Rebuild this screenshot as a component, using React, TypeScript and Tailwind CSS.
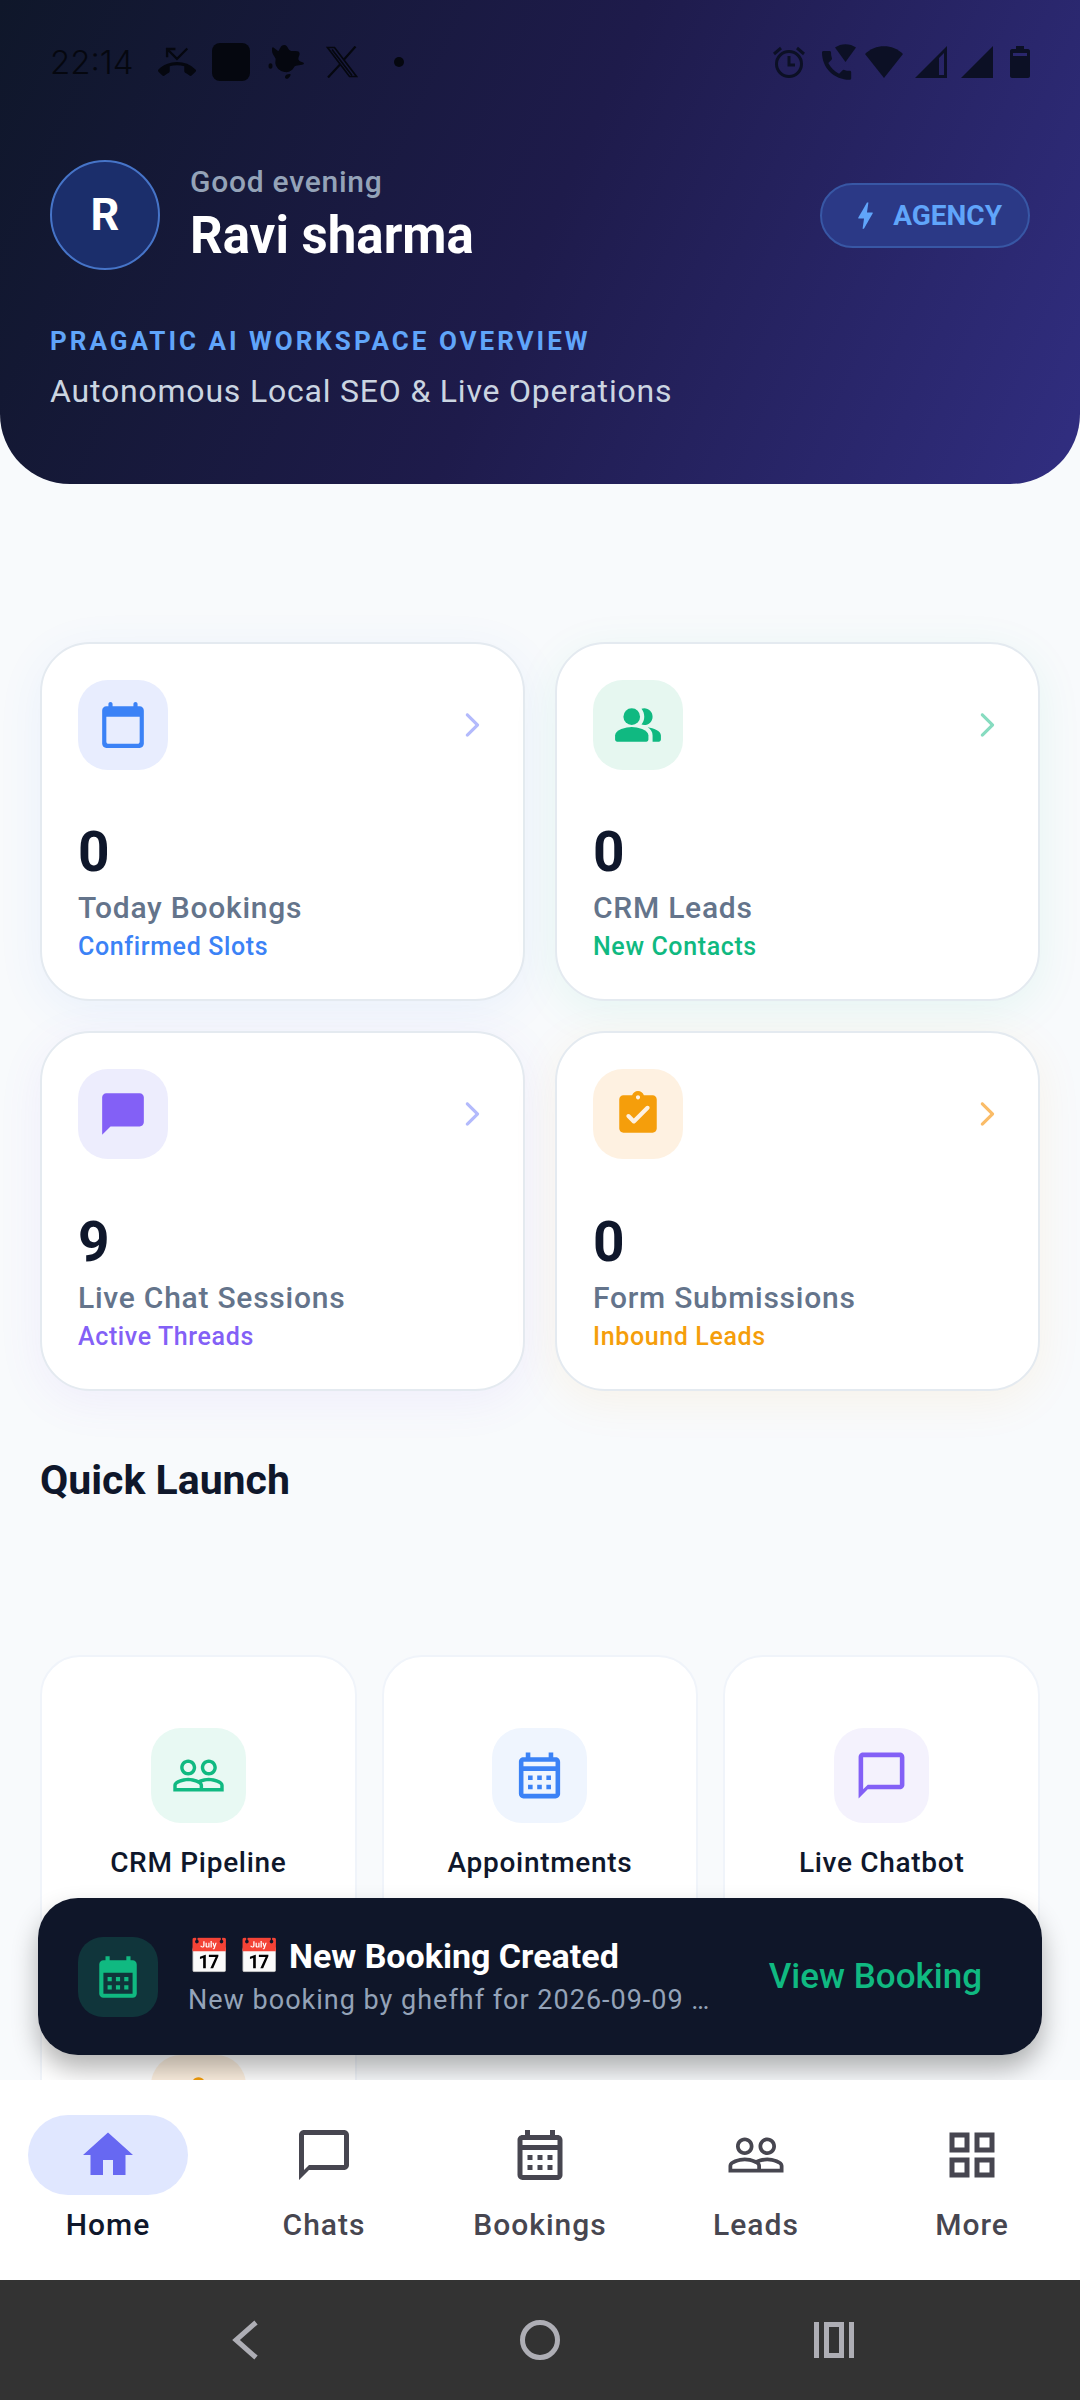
import type { ReactNode } from 'react';
import {
  MdBolt,
  MdCalendarMonth,
  MdChatBubble,
  MdChatBubbleOutline,
  MdHome,
  MdOutlineAssignment,
  MdOutlineCalendarMonth,
  MdOutlineGridView,
  MdPeopleOutline,
  MdPhoneMissed,
} from 'react-icons/md';

function CalendarTodayIcon() {
  return (
    <svg viewBox="0 0 24 24" className="size-[50px] fill-current">
      <path d="M20 3h-1V2c0-.55-.45-1-1-1s-1 .45-1 1v1H7V2c0-.55-.45-1-1-1s-1 .45-1 1v1H4c-1.1 0-2 .9-2 2v16c0 1.1.9 2 2 2h16c1.1 0 2-.9 2-2V5c0-1.1-.9-2-2-2zm-1 18H5c-.55 0-1-.45-1-1V8h16v12c0 .55-.45 1-1 1z" />
    </svg>
  );
}

function PeopleIcon() {
  return (
    <svg viewBox="0 0 24 24" className="size-[50px] fill-current">
      <circle cx="9" cy="8" r="4" />
      <path d="M15 12c2.21 0 4-1.79 4-4s-1.79-4-4-4c-.47 0-.91.1-1.33.24C14.5 5.27 15 6.58 15 8s-.5 2.73-1.33 3.76c.42.14.86.24 1.33.24z" />
      <path d="M16.67 13.13C18.04 14.06 19 15.32 19 17v3h3c.55 0 1-.45 1-1v-2c0-2.18-3.57-3.47-6.33-3.87z" />
      <path d="M9 13c-2.67 0-8 1.34-8 4v2c0 .55.45 1 1 1h14c.55 0 1-.45 1-1v-2c0-2.66-5.33-4-8-4z" />
    </svg>
  );
}

function TaskIcon() {
  return (
    <svg viewBox="0 0 24 24" className="size-[50px] fill-current">
      <path
        fillRule="evenodd"
        d="M19 3h-4.18C14.4 1.84 13.3 1 12 1s-2.4.84-2.82 2H5c-1.1 0-2 .9-2 2v14c0 1.1.9 2 2 2h14c1.1 0 2-.9 2-2V5c0-1.1-.9-2-2-2zm-7 0c.55 0 1 .45 1 1s-.45 1-1 1-1-.45-1-1 .45-1 1-1zM10.71 16.29c-.39.39-1.02.39-1.41 0L6.71 13.7c-.39-.39-.39-1.02 0-1.41.39-.39 1.02-.39 1.41 0L10 14.17l5.88-5.88c.39-.39 1.02-.39 1.41 0 .39.39.39 1.02 0 1.41l-6.58 6.59z"
      />
    </svg>
  );
}

function ArrowIcon({ className }: { className: string }) {
  return (
    <svg viewBox="0 0 24 24" className={`size-[30px] fill-current ${className}`}>
      <path d="M7.38 21.01c.49.49 1.28.49 1.77 0l8.31-8.31c.39-.39.39-1.02 0-1.41L9.15 2.98c-.49-.49-1.28-.49-1.77 0s-.49 1.28 0 1.77L14.62 12l-7.25 7.25c-.48.48-.48 1.28.01 1.76z" />
    </svg>
  );
}

function StatusBar() {
  return (
    <div className="flex h-[124px] items-center justify-between">
      <div className="flex items-center text-[#05070f]">
        <span className="font-[Inter] text-[33px] leading-10 font-light">22:14</span>
        <MdPhoneMissed className="ml-6 size-[38px]" />
        <span className="ml-4 size-[38px] rounded-lg bg-current" />
        {/* paint splash */}
        <svg viewBox="0 0 36 34" className="ml-[18px] h-[34px] w-9 fill-current">
          <path d="M4 3c1-2 2 0 4 1.500 1.500 1 2 2 3 1C12 3 13.500 0 16 0c2.500 0 3.500 2 4.500 4 1 1.500 2 2 4 2h3c3 0 4.500 1 4 3.500-.4 2-1.500 3.500-1 5s2 2 4 2.800c2 .8 2 2-.5 2.500l-6 1c-2 .5-2 2-3.500 3.700-2 2-5 3-8 2.500-5-1-8-4-9-8-.6-2.500.500-3.500 0-5.500C6.500 11 4 9 4 6z" />
          <ellipse cx="2.500" cy="21" rx="2" ry="2.800" />
          <path d="M17 32c0-2 2-3 5-3 1.500.5 0 3-2 4.500-1.500.8-3 0-3-1.500z" />
        </svg>
        <svg
          viewBox="0 0 32 32"
          className="ml-[22px] size-8"
          fill="none"
          stroke="currentColor"
          strokeWidth="1.700"
        >
          <path d="M1.500 1.500h7l22 29h-7zM6 3.500l20 26" />
          <path d="M29.500.500L18 13.500M14 18.500L2 31.500" strokeWidth="2.200" />
        </svg>
        <span className="ml-9 size-[10px] rounded-full bg-current" />
      </div>
      <div className="flex items-center text-[#0c1025]">
        {/* alarm */}
        <svg viewBox="0 0 32 32" className="size-8" fill="none" stroke="currentColor" strokeWidth="3">
          <circle cx="16" cy="18" r="12.500" />
          <path d="M1 8l7-6M31 8l-7-6M16 10v9h6" />
        </svg>
        {/* wifi calling */}
        <svg viewBox="0 0 34 36" className="ml-[17px] h-9 w-[34px] fill-current">
          <path d="M13 3.500C19-1 28-1 34 3.500L23.500 18z" />
          <path d="M0 8.500C0 7.500.7 7 1.500 7h6C8.500 7 9 7.600 9 8.500c0 2 .3 4 .9 5.600.2.600.1 1.200-.4 1.700L6.300 19c2.400 4.600 6.200 8.400 10.800 10.800l3.500-3.500c.4-.4 1-.6 1.600-.4 1.700.6 3.600.9 5.500.9.900 0 1.500.600 1.500 1.500v6c0 .9-.6 1.500-1.500 1.500C12 35.800 0 24 0 8.500z" />
        </svg>
        <svg viewBox="0 0 38 32" className="ml-[9px] h-8 w-[38px] fill-current">
          <path d="M0 8C10-2.500 28-2.500 38 8L19 32z" />
        </svg>
        <svg viewBox="0 0 32 32" className="ml-3 size-8 fill-current">
          <path fillRule="evenodd" d="M32 0v32H0zM24 12v17h5V7z" />
        </svg>
        <svg viewBox="0 0 32 32" className="ml-[14px] size-8 fill-current">
          <path d="M32 0v32H0z" />
        </svg>
        <svg viewBox="0 0 20 32" className="ml-[17px] h-8 w-5 fill-current">
          <path
            fillRule="evenodd"
            d="M6 0h8v3h4c1 0 2 1 2 2v25c0 1-1 2-2 2H2c-1 0-2-1-2-2V5c0-1 1-2 2-2h4zM3 7v3h14V7z"
          />
        </svg>
      </div>
    </div>
  );
}

function Header() {
  return (
    <header className="rounded-b-[70px] bg-[linear-gradient(114deg,#0f172a,#1e1b4b_50%,#312e81)] px-[50px] pb-[69px]">
      <StatusBar />
      <div className="mt-9 flex items-center">
        <div className="flex size-[110px] items-center justify-center rounded-full border-2 border-[#4674c8] bg-[#1b2e6b] text-[45px] font-bold text-white">
          R
        </div>
        <div className="ml-[30px] flex-1">
          <p className="text-[30px] leading-[42px] font-medium tracking-wide text-[#94a3b8]">Good evening</p>
          <h1 className="text-[51px] leading-[66px] font-bold text-white">Ravi sharma</h1>
        </div>
        <div className="flex items-center gap-[10px] rounded-full border-2 border-[#3857a5] bg-[#2b3986] px-[26px] py-[11px] text-[#60a5fa]">
          <MdBolt className="size-[35px]" />
          <span className="text-[28px] leading-[39px] font-bold">AGENCY</span>
        </div>
      </div>
      <h2 className="mt-[52px] text-[26px] leading-[38px] font-bold tracking-[3px] text-[#60a5fa]">
        PRAGATIC AI WORKSPACE OVERVIEW
      </h2>
      <p className="mt-[7px] text-[32px] leading-[48px] tracking-wide text-[#cbd5e1]">
        Autonomous Local SEO &amp; Live Operations
      </p>
    </header>
  );
}

type Stat = {
  value: number;
  title: string;
  note: string;
  icon: ReactNode;
  card: string;
  tile: string;
  text: string;
  arrow: string;
};

const stats: Stat[] = [
  {
    value: 0,
    title: 'Today Bookings',
    note: 'Confirmed Slots',
    icon: <CalendarTodayIcon />,
    card: 'shadow-[0_10px_46px_rgba(59,130,246,0.08)]',
    tile: 'bg-[#e8edfe]',
    text: 'text-[#3b82f6]',
    arrow: 'text-[#b3bafc]',
  },
  {
    value: 0,
    title: 'CRM Leads',
    note: 'New Contacts',
    icon: <PeopleIcon />,
    card: 'shadow-[0_10px_46px_rgba(16,185,129,0.08)]',
    tile: 'bg-[#e6f7f0]',
    text: 'text-[#10b981]',
    arrow: 'text-[#87dcc0]',
  },
  {
    value: 9,
    title: 'Live Chat Sessions',
    note: 'Active Threads',
    icon: <MdChatBubble className="size-[50px]" />,
    card: 'shadow-[0_10px_46px_rgba(139,92,246,0.08)]',
    tile: 'bg-[#ededfd]',
    text: 'text-[#8360f6]',
    arrow: 'text-[#b3bafc]',
  },
  {
    value: 0,
    title: 'Form Submissions',
    note: 'Inbound Leads',
    icon: <TaskIcon />,
    card: 'shadow-[0_10px_46px_rgba(245,158,11,0.08)]',
    tile: 'bg-[#fef1e1]',
    text: 'text-[#f59e0b]',
    arrow: 'text-[#fabc68]',
  },
];

function StatCard({ stat }: { stat: Stat }) {
  return (
    <a
      href="#"
      className={`flex aspect-[27/20] flex-col justify-between rounded-[50px] border-2 border-[#e4eaf0] bg-white px-9 pt-9 pb-[34px] ${stat.card}`}
    >
      <div className="flex items-center justify-between">
        <span className={`flex size-[90px] items-center justify-center rounded-[30px] ${stat.tile} ${stat.text}`}>
          {stat.icon}
        </span>
        <ArrowIcon className={stat.arrow} />
      </div>
      <div>
        <p className="mb-1 text-[55px] leading-[60px] font-bold text-slate-900">{stat.value}</p>
        <p className="text-[30px] leading-[43px] font-medium tracking-wide text-[#64748b]">{stat.title}</p>
        <p className={`text-[25px] leading-[36px] font-medium tracking-wide ${stat.text}`}>{stat.note}</p>
      </div>
    </a>
  );
}

const shortcuts = [
  { label: 'CRM Pipeline', icon: <MdPeopleOutline className="size-[55px]" />, tile: 'bg-[#e8f9f3] text-[#10b981]' },
  {
    label: 'Appointments',
    icon: <MdOutlineCalendarMonth className="size-[55px]" />,
    tile: 'bg-[#eff5fe] text-[#3b82f6]',
  },
  {
    label: 'Live Chatbot',
    icon: <MdChatBubbleOutline className="size-[55px]" />,
    tile: 'bg-[#f4f2fd] text-[#8360f6]',
  },
  { label: '', icon: <MdOutlineAssignment className="size-[55px]" />, tile: 'bg-[#fef1e1] text-[#f59e0b]' },
];

function Snackbar() {
  return (
    <div
      role="status"
      className="absolute inset-x-[38px] bottom-[25px] flex items-center rounded-[40px] bg-[#0f1629] px-10 py-[35px] shadow-[0_14px_26px_rgba(0,0,0,0.3)]"
    >
      <span className="flex size-20 items-center justify-center rounded-[25px] bg-[#10353b] text-[#10b981]">
        <MdCalendarMonth className="size-[50px]" />
      </span>
      <div className="ml-[30px] min-w-0 flex-1">
        <p className="truncate text-[34px] leading-[47px] font-bold text-white">📅 📅 New Booking Created</p>
        <p className="truncate text-[27px] leading-[40px] tracking-[1px] text-[#94a3b8]">
          New booking by ghefhf for 2026-09-09 …
        </p>
      </div>
      <button className="px-5 text-[35px] leading-[50px] font-medium text-[#10b981]">View Booking</button>
    </div>
  );
}

const tabs = [
  { label: 'Home', icon: <MdHome className="size-[60px]" />, active: true },
  { label: 'Chats', icon: <MdChatBubbleOutline className="size-[60px]" /> },
  { label: 'Bookings', icon: <MdOutlineCalendarMonth className="size-[60px]" /> },
  { label: 'Leads', icon: <MdPeopleOutline className="size-[60px]" /> },
  { label: 'More', icon: <MdOutlineGridView className="size-[60px]" /> },
];

function TabBar() {
  return (
    <nav className="grid h-[200px] shrink-0 grid-cols-5 bg-white pt-[35px]">
      {tabs.map((tab) => (
        <a
          key={tab.label}
          href="#"
          className={`flex flex-col items-center gap-[10px] ${tab.active ? 'text-slate-900' : 'text-[#474650]'}`}
        >
          <span
            className={`flex h-20 w-40 items-center justify-center rounded-full ${
              tab.active ? 'bg-indigo-100 text-[#6768f2]' : ''
            }`}
          >
            {tab.icon}
          </span>
          <span className="text-[30px] leading-10 font-medium tracking-[1px]">{tab.label}</span>
        </a>
      ))}
    </nav>
  );
}

function SystemBar() {
  return (
    <div className="flex h-[120px] shrink-0 items-center justify-center gap-[234px] bg-[#333333] text-[#aeaeb5]">
      <button aria-label="Back">
        <svg viewBox="0 0 60 60" className="size-[60px]" fill="none" stroke="currentColor" strokeWidth="5">
          <path d="M40 12.500L20 30 40 47.500" />
        </svg>
      </button>
      <button aria-label="Home">
        <svg viewBox="0 0 60 60" className="size-[60px]" fill="none" stroke="currentColor" strokeWidth="5">
          <circle cx="30" cy="30" r="17.500" />
        </svg>
      </button>
      <button aria-label="Recents">
        <svg viewBox="0 0 60 60" className="size-[60px]" fill="none" stroke="currentColor" strokeWidth="5">
          <path d="M12.500 12v36M47.500 12v36M22.500 14.500h15v31h-15z" />
        </svg>
      </button>
    </div>
  );
}

export default function App() {
  return (
    <div className="flex h-screen flex-col bg-[#f8fafc] font-[Roboto,sans-serif]">
      <div className="relative min-h-0 flex-1 overflow-hidden">
        <Header />
        <main className="px-10 pt-[158px]">
          <section className="grid grid-cols-2 gap-[30px]">
            {stats.map((stat) => (
              <StatCard key={stat.title} stat={stat} />
            ))}
          </section>

          <h2 className="mt-[60px] text-[41px] leading-[58px] font-bold text-slate-900">Quick Launch</h2>
          <section className="mt-[146px] grid grid-cols-3 gap-[25px]">
            {shortcuts.map((item, i) => (
              <a
                key={i}
                href="#"
                className="flex aspect-[21/20] flex-col items-center justify-center gap-5 rounded-[40px] border-2 border-[#f0f4fa] bg-white"
              >
                <span className={`flex size-[95px] items-center justify-center rounded-[30px] ${item.tile}`}>
                  {item.icon}
                </span>
                <span className="h-[39px] text-[28px] leading-[39px] font-medium tracking-wide text-slate-900">
                  {item.label}
                </span>
              </a>
            ))}
          </section>
        </main>
        <Snackbar />
      </div>
      <TabBar />
      <SystemBar />
    </div>
  );
}
